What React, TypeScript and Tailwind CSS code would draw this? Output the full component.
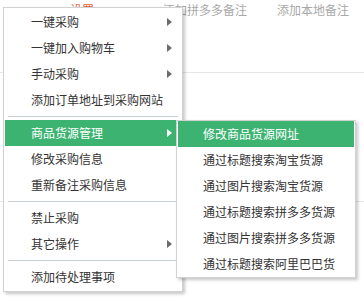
import React from "react";

type Item =
  | { kind: "item"; label: string; sub?: boolean; active?: boolean }
  | { kind: "sep" };

const mainItems: Item[] = [
  { kind: "item", label: "一键采购", sub: true },
  { kind: "item", label: "一键加入购物车", sub: true },
  { kind: "item", label: "手动采购", sub: true },
  { kind: "item", label: "添加订单地址到采购网站" },
  { kind: "sep" },
  { kind: "item", label: "商品货源管理", sub: true, active: true },
  { kind: "item", label: "修改采购信息" },
  { kind: "item", label: "重新备注采购信息" },
  { kind: "sep" },
  { kind: "item", label: "禁止采购" },
  { kind: "item", label: "其它操作", sub: true },
  { kind: "sep" },
  { kind: "item", label: "添加待处理事项" },
];

const subItems = [
  "修改商品货源网址",
  "通过标题搜索淘宝货源",
  "通过图片搜索淘宝货源",
  "通过标题搜索拼多多货源",
  "通过图片搜索拼多多货源",
  "通过标题搜索阿里巴巴货",
];

function Arrow({ white }: { white?: boolean }) {
  return (
    <svg width="5" height="8" viewBox="0 0 5 8" className="absolute left-[162px] top-[9px]">
      <polygon points="0,0 5,4 0,8" fill={white ? "#ffffff" : "#6b6b6b"} />
    </svg>
  );
}

export default function App() {
  return (
    <div
      className="relative w-[364px] h-[301px] overflow-hidden bg-white"
      style={{ fontFamily: '"Noto Sans CJK SC", "Noto Sans", sans-serif' }}
    >
      {/* page behind the menu */}
      <div className="flex items-center h-[19px] text-[12px] text-[#a8a8a8] leading-none">
        <span className="ml-[70px] text-[#e8623a]">设置</span>
        <span className="ml-[69px]">添加拼多多备注</span>
        <span className="ml-[30px]">添加本地备注</span>
      </div>
      <div className="mt-[53px] h-px bg-[#e6e6e6]" />
      <div className="mt-[128px] h-px bg-[#e6e6e6]" />

      {/* main context menu */}
      <div className="absolute left-[3px] top-[7px] w-[180px] border border-[#d2d2d2] bg-white p-px text-[12px] text-[#333] shadow-[2px_2px_3px_rgba(0,0,0,0.22)]">
        {mainItems.map((it, i) =>
          it.kind === "sep" ? (
            <div key={i} className="mx-[3px] mt-[3px] mb-[3px] h-px bg-[#c9d0d3]" />
          ) : (
            <div
              key={i}
              className={`relative flex h-[26px] items-center pl-[26px] ${
                it.active ? "bg-[#3cb371] text-white" : ""
              }`}
            >
              {it.label}
              {it.sub && <Arrow white={it.active} />}
            </div>
          )
        )}
      </div>

      {/* submenu */}
      <div className="absolute left-[176px] top-[120px] w-[180px] border border-[#d2d2d2] bg-white px-px text-[12px] text-[#333] shadow-[2px_2px_3px_rgba(0,0,0,0.22)]">
        {subItems.map((label, i) => (
          <div
            key={label}
            className={`flex h-[26px] items-center pl-[25px] ${
              i === 0 ? "bg-[#3cb371] text-white" : ""
            }`}
          >
            {label}
          </div>
        ))}
      </div>
    </div>
  );
}
